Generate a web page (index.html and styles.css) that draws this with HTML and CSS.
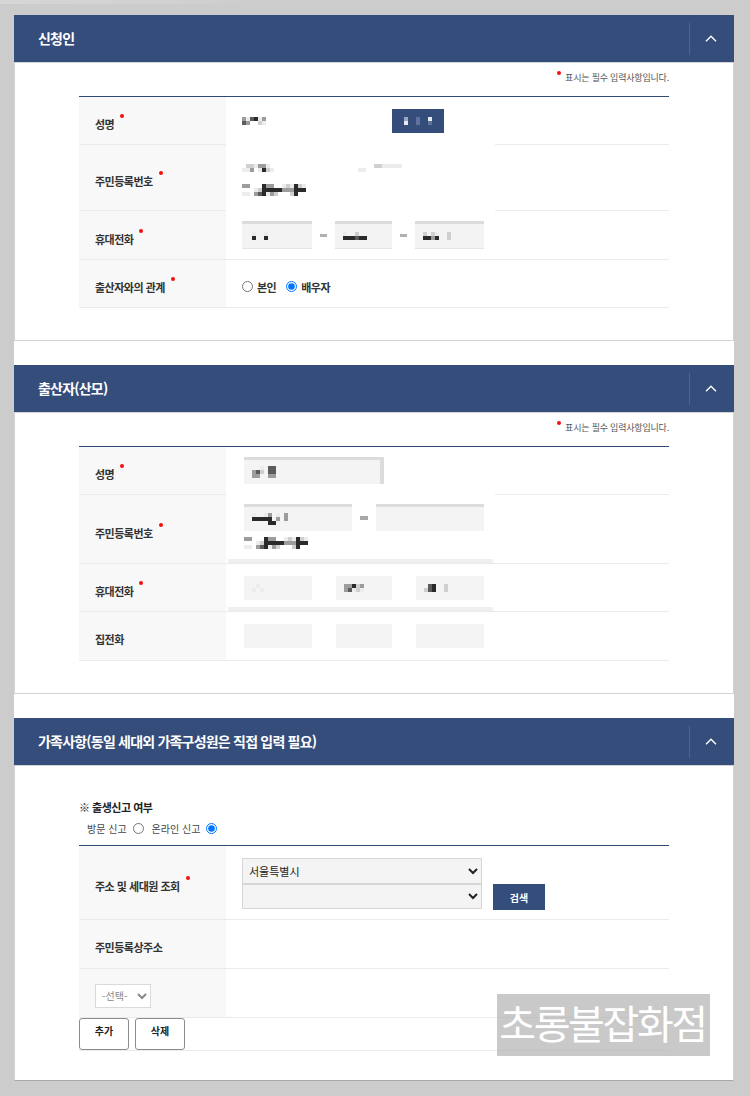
FILE: index.html
```html
<!DOCTYPE html>
<html lang="ko">
<head>
<meta charset="utf-8">
<title>출생신고</title>
<link rel="stylesheet" href="styles.css">
</head>
<body>
<div class="shade"></div>
<div class="wrap">

  <section class="sec">
    <div class="sec-head">
      <h2 class="sec-title">신청인</h2>
      <button class="toggle" type="button"><svg width="12" height="7" viewBox="0 0 12 7"><polyline points="1,6.3 6,1.3 11,6.3" fill="none" stroke="#fff" stroke-width="1.4"/></svg></button>
    </div>
    <div class="panel">
      <p class="req-note">표시는 필수 입력사항입니다.</p>
      <div class="form">
        <div class="row h48 gap">
          <div class="th"><span class="lbl req">성명</span></div>
          <div class="td">
            <div class="name-slot">
              <span class="mz"><i class="m"></i><i class="d"></i><i class="e"></i><i class="m"></i><i class="d"></i><i></i><i class="k"></i><i></i><i class="e"></i><i class="l"></i><i class="m"></i><i class="e"></i></span>
            </div>
            <button class="btn-blue" type="button"><span class="mz"><i class="b2"></i><i class="b1"></i><i></i><i></i><i></i><i></i><i class="b3"></i><i class="b3"></i><i></i><i></i><i></i><i></i><i class="b1"></i><i class="b3"></i></span></button>
          </div>
        </div>
        <div class="row h66 gap">
          <div class="th"><span class="lbl req">주민등록번호</span></div>
          <div class="td col pt19">
            <div class="mz-line">
              <span class="mz"><i></i><i class="e"></i><i class="l"></i><i class="e"></i><i class="l"></i><i class="m"></i><i class="e"></i><i></i><i class="m"></i><i class="e"></i><i class="m"></i><i class="k"></i><i class="e"></i><i class="l"></i><i></i><i class="e"></i></span>
              <span class="mz mz-b"><i></i><i class="e"></i><i></i><i class="e"></i></span>
              <span class="mz mz-c"><i class="l"></i><i></i><i class="l"></i><i></i><i class="e"></i><i></i><i class="e"></i><i></i><i class="e"></i><i></i><i class="e"></i><i></i><i class="e"></i><i></i></span>
            </div>
            <span class="mz r3 mt12"><i class="m"></i><i></i><i class="e"></i><i class="m"></i><i></i><i class="e"></i><i></i><i></i><i></i><i></i><i class="e"></i><i class="m"></i><i></i><i class="l"></i><i class="d"></i><i class="k"></i><i class="k"></i><i class="k"></i><i class="m"></i><i class="k"></i><i class="e"></i><i class="m"></i><i class="k"></i><i class="m"></i><i></i><i class="k"></i><i class="l"></i><i></i><i class="k"></i><i></i><i class="e"></i><i class="m"></i><i></i><i class="l"></i><i class="m"></i><i></i><i class="e"></i><i class="m"></i><i class="l"></i><i class="k"></i><i class="k"></i><i class="k"></i><i class="l"></i><i class="k"></i><i></i><i class="e"></i><i class="k"></i><i></i></span>
          </div>
        </div>
        <div class="row h49">
          <div class="th"><span class="lbl req">휴대전화</span></div>
          <div class="td">
            <div class="fld w70 pl10"><span class="mz"><i class="e"></i><i class="k"></i><i></i><i></i><i></i><i></i><i class="e"></i><i class="k"></i></span></div>
            <span class="dash"></span>
            <div class="fld w57"><span class="mz"><i class="e"></i><i class="k"></i><i></i><i class="k"></i><i></i><i class="k"></i><i class="l"></i><i class="d"></i><i></i><i class="k"></i><i></i><i class="k"></i></span></div>
            <span class="dash"></span>
            <div class="fld w69"><span class="mz"><i class="l"></i><i class="k"></i><i></i><i class="k"></i><i class="l"></i><i class="m"></i><i class="e"></i><i class="k"></i><i></i><i></i><i></i><i></i><i class="l"></i><i class="l"></i></span></div>
          </div>
        </div>
        <div class="row h48">
          <div class="th"><span class="lbl req">출산자와의 관계</span></div>
          <div class="td pt6">
            <label class="rad"><input type="radio" name="rel"><span>본인</span></label>
            <label class="rad"><input type="radio" name="rel" checked><span>배우자</span></label>
          </div>
        </div>
      </div>
    </div>
  </section>

  <section class="sec">
    <div class="sec-head">
      <h2 class="sec-title">출산자(산모)</h2>
      <button class="toggle" type="button"><svg width="12" height="7" viewBox="0 0 12 7"><polyline points="1,6.3 6,1.3 11,6.3" fill="none" stroke="#fff" stroke-width="1.4"/></svg></button>
    </div>
    <div class="panel">
      <p class="req-note">표시는 필수 입력사항입니다.</p>
      <div class="form">
        <div class="row h48 gap">
          <div class="th"><span class="lbl req">성명</span></div>
          <div class="td pl18">
            <div class="fld2 name-fld"><span class="mz r3"><i></i><i class="m"></i><i class="m"></i><i></i><i class="d"></i><i class="m"></i><i class="e"></i><i class="l"></i><i></i><i></i><i></i><i></i><i class="d"></i><i class="d"></i><i class="m"></i><i class="d"></i><i class="d"></i><i class="m"></i></span></div>
          </div>
        </div>
        <div class="row h69 band">
          <div class="th"><span class="lbl req">주민등록번호</span></div>
          <div class="td pl18 col pt9">
            <div class="rrn">
              <div class="fld2 w108 topband"><span class="mz r3"><i class="e"></i><i class="k"></i><i></i><i></i><i class="k"></i><i></i><i></i><i class="k"></i><i></i><i class="e"></i><i class="k"></i><i></i><i class="m"></i><i class="k"></i><i class="k"></i><i></i><i></i><i class="k"></i><i class="e"></i><i class="m"></i><i></i><i></i><i></i><i></i><i class="m"></i><i class="m"></i><i></i></span></div>
              <span class="dash2"></span>
              <div class="fld2 w108 topband"></div>
            </div>
            <span class="mz r3 mt6"><i class="m"></i><i></i><i class="e"></i><i class="m"></i><i></i><i class="e"></i><i></i><i></i><i></i><i></i><i class="e"></i><i class="m"></i><i></i><i class="l"></i><i class="d"></i><i class="k"></i><i class="k"></i><i class="k"></i><i class="m"></i><i class="k"></i><i class="e"></i><i class="m"></i><i class="k"></i><i class="m"></i><i></i><i class="k"></i><i class="l"></i><i></i><i class="k"></i><i></i><i class="e"></i><i class="m"></i><i></i><i class="l"></i><i class="m"></i><i></i><i class="e"></i><i class="m"></i><i class="l"></i><i class="k"></i><i class="k"></i><i class="k"></i><i class="l"></i><i class="k"></i><i></i><i class="e"></i><i class="k"></i><i></i></span>
          </div>
        </div>
        <div class="row h48 band">
          <div class="th"><span class="lbl req">휴대전화</span></div>
          <div class="td pl18 phones">
            <div class="fld2 w68"><span class="mz"><i></i><i class="e"></i><i class="e"></i><i></i><i></i><i class="e"></i></span></div>
            <div class="fld2 w56"><span class="mz"><i class="m"></i><i class="m"></i><i class="m"></i><i class="d"></i><i class="k"></i><i class="e"></i><i class="l"></i><i class="l"></i><i class="m"></i><i class="e"></i></span></div>
            <div class="fld2 w68"><span class="mz"><i></i><i class="l"></i><i class="d"></i><i class="d"></i><i class="k"></i><i class="k"></i><i></i><i></i><i></i><i></i><i class="l"></i><i class="l"></i></span></div>
          </div>
        </div>
        <div class="row h49">
          <div class="th"><span class="lbl">집전화</span></div>
          <div class="td pl18 phones">
            <div class="fld2 w68"></div>
            <div class="fld2 w56"></div>
            <div class="fld2 w68"></div>
          </div>
        </div>
      </div>
    </div>
  </section>

  <section class="sec last">
    <div class="sec-head">
      <h2 class="sec-title">가족사항(동일 세대외 가족구성원은 직접 입력 필요)</h2>
      <button class="toggle" type="button"><svg width="12" height="7" viewBox="0 0 12 7"><polyline points="1,6.3 6,1.3 11,6.3" fill="none" stroke="#fff" stroke-width="1.4"/></svg></button>
    </div>
    <div class="panel p3">
      <p class="birth-q">※ 출생신고 여부</p>
      <div class="birth-opt">
        <span>방문 신고</span><input type="radio" name="bt">
        <span>온라인 신고</span><input type="radio" name="bt" checked>
      </div>
      <div class="form">
        <div class="row h74">
          <div class="th"><span class="lbl req">주소 및 세대원 조회</span></div>
          <div class="td top pt12">
            <div class="sel-col">
              <select class="sel s1"><option>서울특별시</option></select>
              <select class="sel s2"><option></option></select>
            </div>
            <button class="btn-search" type="button">검색</button>
          </div>
        </div>
        <div class="row h49">
          <div class="th"><span class="lbl">주민등록상주소</span></div>
          <div class="td"></div>
        </div>
        <div class="row h49">
          <div class="th"><select class="sel-small"><option>-선택-</option></select></div>
          <div class="td"></div>
        </div>
        <div class="btn-row">
          <button class="btn-line" type="button">추가</button>
          <button class="btn-line" type="button">삭제</button>
        </div>
      </div>
    </div>
  </section>

  <div class="watermark">초롱불잡화점</div>
</div>
</body>
</html>
```

FILE: styles.css
```css
* { box-sizing: border-box; }

body {
  margin: 0;
  background: #cccccc;
  font-family: "Noto Sans CJK KR", "Noto Sans", sans-serif;
  color: #333;
}

.shade {
  width: 250px;
  height: 4px;
  background: linear-gradient(to right, #d6d6d6, #d0d0d0 80%, #cccccc);
}

.wrap {
  position: relative;
  width: 720px;
  margin: 11px 0 0 14px;
  background: #fff;
}

.sec + .sec { margin-top: 24px; }

.sec-head {
  height: 47px;
  background: #354d7a;
  display: flex;
  align-items: center;
  justify-content: space-between;
  padding-left: 24px;
}

.sec-title {
  margin: 0 0 2px;
  font-size: 14px;
  font-weight: 700;
  color: #fff;
  letter-spacing: -0.8px;
}

.toggle {
  width: 45px;
  height: 32px;
  border: 0;
  border-left: 1px solid #4d6390;
  background: none;
  padding: 0 3px 0 0;
  display: flex;
  align-items: center;
  justify-content: center;
}

.panel {
  border: 1px solid #d3d3d3;
  padding: 8px 64px 32px;
}

.last .panel { border-bottom-color: #a8a8a8; }
.panel.p3 { padding: 33px 64px 29px; }

.req-note {
  margin: 0 0 11px;
  height: 14px;
  line-height: 14px;
  text-align: right;
  font-size: 9px;
  color: #555;
  letter-spacing: -0.2px;
}

.req-note::before {
  content: "";
  display: inline-block;
  width: 4px;
  height: 4px;
  border-radius: 50%;
  background: #f01010;
  vertical-align: 6px;
  margin-right: 4px;
}

.form { border-top: 1px solid #304a78; }

.row {
  display: grid;
  grid-template-columns: 147px 1fr;
}

.h48 { height: 48px; }
.h49 { height: 49px; }
.h66 { height: 66px; }
.h69 { height: 69px; }
.h74 { height: 74px; }

.th {
  background: #f8f8f8;
  border-bottom: 1px solid #ebebeb;
  display: flex;
  align-items: center;
  padding: 5px 0 0 16px;
}

.td {
  border-bottom: 1px solid #ebebeb;
  display: flex;
  align-items: center;
  padding-left: 16px;
}

.gap .td {
  border-bottom-color: transparent;
  background: linear-gradient(#ebebeb, #ebebeb) right bottom / calc(100% - 269px) 1px no-repeat border-box;
}

.band .td {
  background: linear-gradient(#efefef, #efefef) left 2px bottom 1px / 265px 4px no-repeat border-box;
}

.td.col { flex-direction: column; align-items: flex-start; }
.td.top { align-items: flex-start; }
.pt19 { padding-top: 19px; }
.pt12 { padding-top: 12px; }
.pt9 { padding-top: 9px; }
.pt6 { padding-top: 6px; }
.pl18 { padding-left: 18px; }
.mt12 { margin-top: 12px; }
.mt6 { margin-top: 6px; }

.lbl {
  font-size: 11px;
  font-weight: 700;
  letter-spacing: -0.5px;
  color: #333;
  white-space: nowrap;
}

.req::after {
  content: "";
  display: inline-block;
  width: 4px;
  height: 4px;
  border-radius: 50%;
  background: #f01010;
  margin-left: 6px;
  vertical-align: 11px;
}

/* pixelated (mosaic) placeholders */
.mz {
  display: grid;
  grid-auto-flow: column;
  grid-template-rows: repeat(2, 4px);
  grid-auto-columns: 4px;
}
.mz.r3 { grid-template-rows: repeat(3, 4px); }
.mz i { display: block; }
.k { background: #2a2a2a; }
.d { background: #5c5c5c; }
.m { background: #9c9c9c; }
.l { background: #cfcfcf; }
.e { background: #ececec; }
.b1 { background: #e6eaf3; }
.b2 { background: #98a7c4; }
.b3 { background: #60739b; }

.name-slot { width: 150px; display: flex; }

.btn-blue {
  width: 52px;
  height: 24px;
  border: 0;
  padding: 0;
  background: #354d7a;
  display: flex;
  align-items: center;
  justify-content: center;
}

.mz-line { display: flex; align-items: flex-start; }
.mz-b { margin-left: 84px; }
.mz-c { margin-left: 8px; }

.fld {
  height: 28px;
  background: #f3f3f3;
  border-top: 3px solid #dcdcdc;
  border-bottom: 1px solid #e4e4e4;
  display: flex;
  align-items: center;
  padding-left: 8px;
}
.w70 { width: 70px; }
.w57 { width: 57px; }
.w69 { width: 69px; }
.pl10 { padding-left: 10px; }

.dash {
  width: 7px;
  height: 3px;
  background: #b0b0b0;
  margin: 0 8px;
}

.rad {
  display: flex;
  align-items: center;
  margin-right: 10px;
  font-size: 11px;
  font-weight: 700;
  letter-spacing: -0.5px;
}
.rad input {
  width: 11px;
  height: 11px;
  margin: 0 4px 0 0;
}

.fld2 {
  height: 24px;
  background: #f4f4f4;
  display: flex;
  align-items: center;
  padding-left: 8px;
}
.name-fld {
  width: 140px;
  height: 27px;
  border-top: 3px solid #dcdcdc;
  border-right: 4px solid #dcdcdc;
}
.topband { height: 27px; border-top: 3px solid #dcdcdc; }
.w108 { width: 108px; }
.w68 { width: 68px; }
.w56 { width: 56px; }

.rrn { display: flex; align-items: center; }
.dash2 {
  width: 8px;
  height: 4px;
  background: #a8a8a8;
  margin: 0 8px;
}

.phones { gap: 24px; }

.birth-q {
  margin: 0;
  font-size: 11px;
  font-weight: 700;
  line-height: 16px;
  letter-spacing: -0.5px;
  color: #222;
}

.birth-opt {
  display: flex;
  align-items: center;
  margin: 5px 0 9px;
  padding-left: 8px;
  height: 16px;
  font-size: 10px;
  color: #444;
}
.birth-opt input {
  width: 11px;
  height: 11px;
  margin: 0 8px 0 6px;
}

.sel-col { display: flex; flex-direction: column; width: 240px; }
.sel {
  width: 240px;
  border: 1px solid #d6d6d6;
  background: #f4f4f4;
  font-family: "Noto Sans CJK KR", sans-serif;
  font-size: 11px;
  color: #222;
  padding: 0 0 0 2px;
  margin: 0;
}
.s1 { height: 26px; }
.s2 { height: 25px; }

.btn-search {
  width: 52px;
  height: 26px;
  margin: 26px 0 0 11px;
  border: 0;
  background: #354d7a;
  color: #fff;
  font-family: "Noto Sans CJK KR", sans-serif;
  font-size: 10px;
  font-weight: 700;
  padding: 0;
}

.sel-small {
  width: 56px;
  height: 24px;
  border: 1px solid #dadada;
  background: #fff;
  font-family: "Noto Sans CJK KR", sans-serif;
  font-size: 10px;
  color: #888;
  padding: 0 0 0 2px;
  margin: 0;
}

.btn-row {
  display: flex;
  gap: 6px;
  height: 33px;
  border-bottom: 1px solid #ebebeb;
}

.btn-line {
  width: 50px;
  height: 32px;
  border: 1px solid #8c8c8c;
  border-radius: 3px;
  background: #fff;
  font-family: "Noto Sans CJK KR", sans-serif;
  font-size: 10px;
  font-weight: 700;
  color: #222;
  padding: 6px 0 0;
  display: flex;
  justify-content: center;
  align-items: flex-start;
  line-height: 12px;
}

.watermark {
  position: absolute;
  left: 483px;
  top: 979px;
  width: 213px;
  height: 62px;
  background: rgba(178, 178, 178, 0.7);
  color: #fff;
  font-size: 40px;
  line-height: 56px;
  text-align: center;
  letter-spacing: -2.4px;
  text-indent: -2px;
  white-space: nowrap;
  overflow: hidden;
}
```
